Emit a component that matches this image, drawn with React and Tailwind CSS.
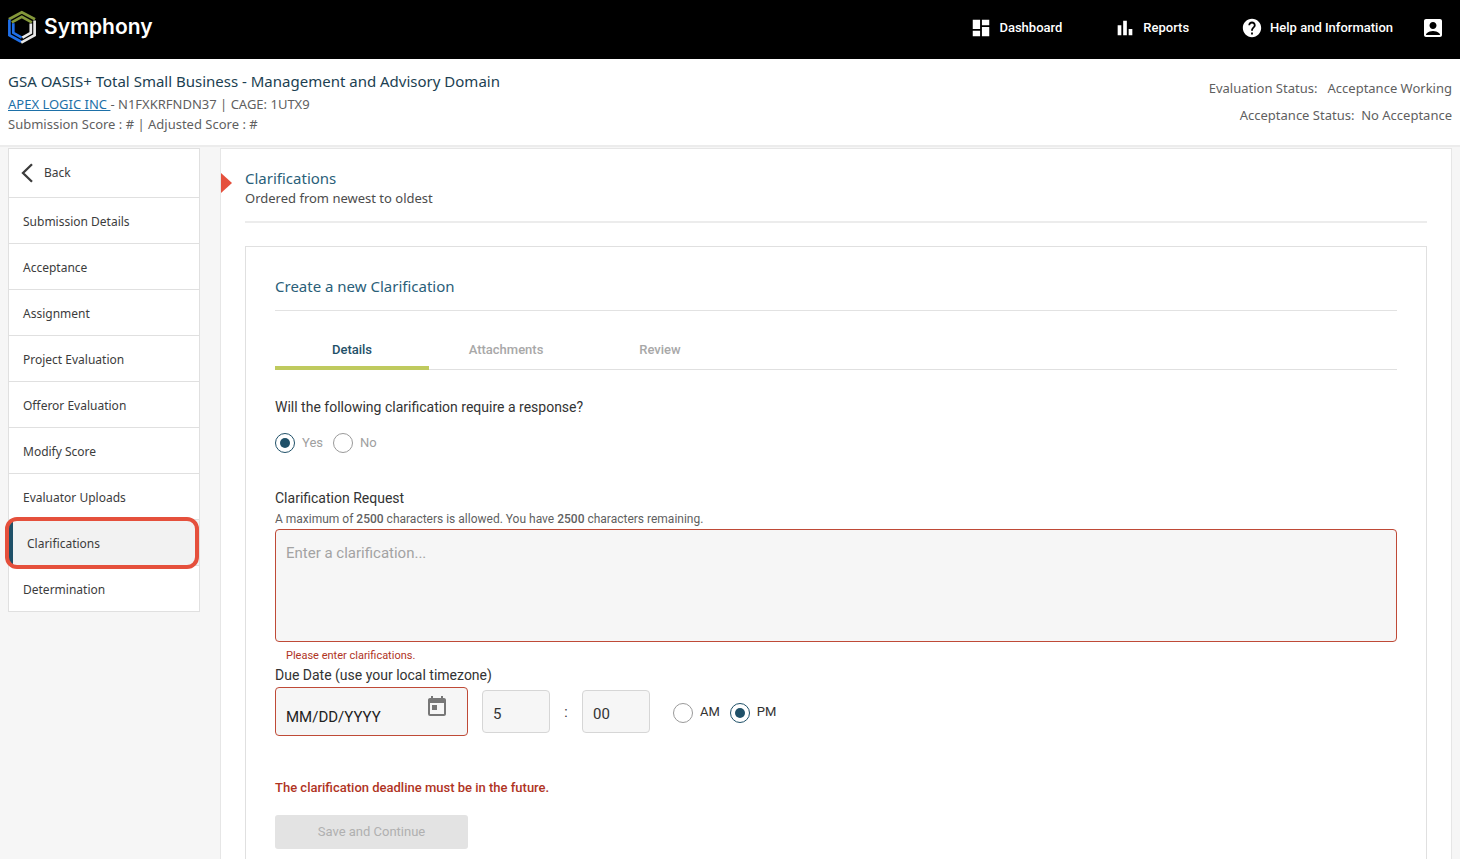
import { MdDashboard, MdBarChart, MdHelp, MdAccountBox, MdToday } from "react-icons/md";

const NAV_ITEMS = [
  "Submission Details",
  "Acceptance",
  "Assignment",
  "Project Evaluation",
  "Offeror Evaluation",
  "Modify Score",
  "Evaluator Uploads",
  "Clarifications",
  "Determination",
];

const RADIO =
  "size-5 shrink-0 appearance-none rounded-full border border-[#9a9a9a] bg-white bg-clip-content p-1 checked:border-[#1f5068] checked:bg-[#1f5068]";

function Logo() {
  return (
    <svg viewBox="0 0 28 34" className="h-[34px] w-7" fill="none" strokeWidth="2.7" aria-hidden="true">
      <path d="M.9 9.2 13.8 2.2l13.2 7" stroke="#84983a" />
      <path d="M3.8 12.4 13.8 6.8l10 5.6" stroke="#84983a" />
      <path d="M1.4 9.4v15.8l11.8 6.6" stroke="#1f6fe8" />
      <path d="M5.3 13.2v9.6l8.4 4.8" stroke="#1f6fe8" />
      <path d="M26.6 10.4v14.8l-13.4 7.4" stroke="#e8e8e8" />
      <path d="M22.8 13.6v9.2l-8.4 4.8" stroke="#e8e8e8" />
    </svg>
  );
}

function Header() {
  return (
    <header className="flex h-[59px] items-center justify-between bg-black px-[15px] pl-2 text-white">
      <a href="#home" className="flex items-center gap-2 pb-[6px]">
        <Logo />
        <span className="font-[Inter,sans-serif] text-[21px] font-semibold">Symphony</span>
      </a>
      <nav className="flex items-center pb-[3px] font-[Roboto,sans-serif] text-[13px] font-medium">
        <a href="#dashboard" className="mr-[52px] flex items-center gap-[7px]">
          <MdDashboard className="size-[22px]" />
          Dashboard
        </a>
        <a href="#reports" className="mr-[52px] flex items-center gap-[7px]">
          <MdBarChart className="size-[22px]" />
          Reports
        </a>
        <a href="#help" className="mr-7 flex items-center gap-[7px]">
          <MdHelp className="size-[22px]" />
          Help and Information
        </a>
        <button type="button" aria-label="Account">
          <MdAccountBox className="size-6" />
        </button>
      </nav>
    </header>
  );
}

function SubmissionBar() {
  return (
    <section className="flex h-[88px] justify-between border-b-2 border-[#ececec] bg-white px-2 text-[13px] text-[#5f5f5f]">
      <div className="pt-[11px]">
        <h1 className="text-[15px] leading-[22px] text-[#1c3f52]">
          GSA OASIS+ Total Small Business - Management and Advisory Domain
        </h1>
        <p className="leading-6">
          <a href="#company" className="text-[#1d70a8] underline">APEX LOGIC INC&nbsp;</a>- N1FXKRFNDN37 | CAGE: 1UTX9
        </p>
        <p className="leading-4">Submission Score : # | Adjusted Score : #</p>
      </div>
      <div className="pt-4 text-right leading-[27px]">
        <p>Evaluation Status: &nbsp; Acceptance Working</p>
        <p>Acceptance Status: &nbsp;No Acceptance</p>
      </div>
    </section>
  );
}

function Sidebar() {
  return (
    <nav className="w-48 shrink-0 self-start border border-[#e0e0e0] bg-white text-xs text-[#3c3c3c]">
      <a href="#back" className="flex h-12 items-center gap-[11px] pl-3">
        <svg viewBox="0 0 12 20" className="h-5 w-3" fill="none" stroke="currentColor" strokeWidth="2.3" aria-hidden="true">
          <path d="M11 1.2 2 10l9 8.8" />
        </svg>
        Back
      </a>
      <ul>
        {NAV_ITEMS.map((item) => (
          <li key={item} className="relative border-t border-[#e0e0e0]">
            {item === "Clarifications" ? (
              <>
                <a href="#clarifications" aria-current="page" className="flex h-[45px] items-center border-l-4 border-[#1f5068] bg-[#f2f2f2] pt-0.5 pl-[14px]">
                  {item}
                </a>
                <span className="pointer-events-none absolute -top-[3px] -left-1 z-10 h-[52px] w-[194px] rounded-xl border-4 border-[#e5503c]" />
              </>
            ) : (
              <a href="#section" className="flex h-[45px] items-center pt-0.5 pl-[14px]">{item}</a>
            )}
          </li>
        ))}
      </ul>
    </nav>
  );
}

function ClarificationForm() {
  return (
    <form className="font-[Roboto,sans-serif] text-sm text-[#333]">
      <div role="tablist" className="mt-[23px] flex border-b border-[#e0e0e0] text-[13px] font-medium text-[#a8a8a8]">
        <button type="button" role="tab" aria-selected="true" className="-mb-px h-9 w-[154px] border-b-4 border-[#bfca5e] text-[#1f5068]">
          Details
        </button>
        <button type="button" role="tab" aria-selected="false" className="h-8 w-[154px]">Attachments</button>
        <button type="button" role="tab" aria-selected="false" className="h-8 w-[154px]">Review</button>
      </div>

      <fieldset className="pt-[27px] text-[#a0a0a0]">
        <legend className="contents text-[#333]">Will the following clarification require a response?</legend>
        <div className="mt-4 flex h-5 items-center gap-[10px] text-[13px]">
          <label className="flex items-center gap-[7px]">
            <input type="radio" name="response" defaultChecked className={RADIO} />
            Yes
          </label>
          <label className="flex items-center gap-[7px]">
            <input type="radio" name="response" className={RADIO} />
            No
          </label>
        </div>
      </fieldset>

      <label htmlFor="request" className="mt-[34px] block leading-[22px]">Clarification Request</label>
      <p className="text-xs leading-5 text-[#5f5f5f]">
        A maximum of <span className="font-medium">2500</span> characters is allowed. You have{" "}
        <span className="font-medium">2500</span> characters remaining.
      </p>
      <textarea
        id="request"
        placeholder="Enter a clarification..."
        className="block h-[113px] w-full resize-none rounded border border-[#bf4a37] bg-[#f6f6f6] px-[10px] py-3 text-[15px] leading-[22px] placeholder:text-[#a3a3a3]"
      />
      <p className="pt-[6px] pl-[11px] text-[11px] leading-4 text-[#b0341f]">Please enter clarifications.</p>
      <label htmlFor="due" className="block leading-[23px]">Due Date (use your local timezone)</label>
      <div className="flex items-center">
        <div className="flex h-[49px] w-[193px] rounded border border-[#bf4a37] bg-[#f6f6f6] pr-[18px]">
          <input id="due" type="text" placeholder="MM/DD/YYYY" className="min-w-0 flex-1 bg-transparent pt-3 pl-[10px] text-[15px] placeholder:text-[#222]" />
          <button type="button" aria-label="Open calendar" className="self-start pt-[7px]">
            <MdToday className="size-6 text-[#777]" />
          </button>
        </div>
        <input type="text" aria-label="Hour" defaultValue="5" className="ml-[14px] h-[43px] w-[68px] rounded border border-[#d6d6d6] bg-[#f6f6f6] px-[10px] pt-1 text-[15px]" />
        <span className="w-8 text-center">:</span>
        <input type="text" aria-label="Minutes" defaultValue="00" className="h-[43px] w-[68px] rounded border border-[#d6d6d6] bg-[#f6f6f6] px-[10px] pt-1 text-[15px]" />
        <div className="ml-[23px] flex items-center gap-[10px] pt-0.5 text-[13px]">
          <label className="flex items-center gap-[7px]">
            <input type="radio" name="meridiem" className={RADIO} />
            AM
          </label>
          <label className="flex items-center gap-[7px]">
            <input type="radio" name="meridiem" defaultChecked className={RADIO} />
            PM
          </label>
        </div>
      </div>
      <p className="mt-[42px] text-[13px] leading-5 font-medium text-[#b0341f]">The clarification deadline must be in the future.</p>
      <button type="submit" disabled className="mt-[17px] block h-[34px] w-[193px] rounded-[3px] bg-[#e3e3e3] text-[13px] text-[#b0b0b0]">
        Save and Continue
      </button>
    </form>
  );
}

export default function App() {
  return (
    <div className="flex min-h-screen flex-col bg-[#f6f6f6] font-['Noto_Sans',sans-serif]">
      <Header />
      <SubmissionBar />
      <div className="flex flex-1 gap-5 px-2 pt-px">
        <Sidebar />
        <main className="relative flex min-w-0 flex-1 flex-col border-x border-t border-[#e6e6e6] bg-white px-6">
          <svg viewBox="0 0 11 20" className="absolute top-6 left-0 h-5 w-[11px]" fill="#e5503c" aria-hidden="true">
            <path d="M0 0 11 10 0 20Z" />
          </svg>
          <div className="border-b-2 border-[#ececec] pt-[19px] pb-[13px]">
            <h2 className="text-[15px] leading-5 text-[#2a6079]">Clarifications</h2>
            <p className="text-[13px] leading-5 text-[#4c4c4c]">Ordered from newest to oldest</p>
          </div>
          <section className="mt-[23px] flex-1 border-x border-t border-[#e0e0e0] px-[29px] pt-[27px] pb-2">
            <h3 className="border-b border-[#e2e2e2] pb-3 text-[15px] leading-6 text-[#2a6079]">Create a new Clarification</h3>
            <ClarificationForm />
          </section>
        </main>
      </div>
    </div>
  );
}
